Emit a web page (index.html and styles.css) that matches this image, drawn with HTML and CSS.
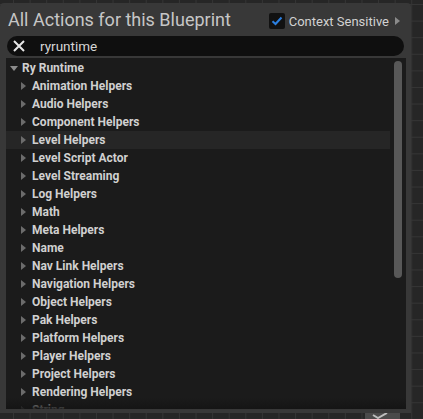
FILE: index.html
```html
<!DOCTYPE html>
<html>
<head>
<meta charset="utf-8">
<link rel="stylesheet" href="styles.css">
</head>
<body>
<div class="panel">
  <div class="header">
    <div class="title">All Actions for this Blueprint</div>
    <div class="ctx">
      <span class="checkbox">
        <svg width="12" height="10" viewBox="0 0 12 10"><path d="M1.5 5.2 L4.5 8 L10.5 1.5" fill="none" stroke="#2b7fe0" stroke-width="2"/></svg>
      </span>
      <span class="ctx-label">Context Sensitive</span>
      <span class="ctx-arrow"></span>
    </div>
  </div>
  <div class="search">
    <svg class="clear" width="12" height="12" viewBox="0 0 12 12"><path d="M1 1 L11 11 M11 1 L1 11" stroke="#e6e6e6" stroke-width="2" fill="none"/></svg>
    <span class="query">ryruntime</span>
  </div>
  <div class="list">
    <div class="row root"><span class="tri-down"></span>Ry Runtime</div>
    <div class="row child"><span class="tri-right"></span>Animation Helpers</div>
    <div class="row child"><span class="tri-right"></span>Audio Helpers</div>
    <div class="row child"><span class="tri-right"></span>Component Helpers</div>
    <div class="row child hover"><span class="tri-right"></span>Level Helpers</div>
    <div class="row child"><span class="tri-right"></span>Level Script Actor</div>
    <div class="row child"><span class="tri-right"></span>Level Streaming</div>
    <div class="row child"><span class="tri-right"></span>Log Helpers</div>
    <div class="row child"><span class="tri-right"></span>Math</div>
    <div class="row child"><span class="tri-right"></span>Meta Helpers</div>
    <div class="row child"><span class="tri-right"></span>Name</div>
    <div class="row child"><span class="tri-right"></span>Nav Link Helpers</div>
    <div class="row child"><span class="tri-right"></span>Navigation Helpers</div>
    <div class="row child"><span class="tri-right"></span>Object Helpers</div>
    <div class="row child"><span class="tri-right"></span>Pak Helpers</div>
    <div class="row child"><span class="tri-right"></span>Platform Helpers</div>
    <div class="row child"><span class="tri-right"></span>Player Helpers</div>
    <div class="row child"><span class="tri-right"></span>Project Helpers</div>
    <div class="row child"><span class="tri-right"></span>Rendering Helpers</div>
    <div class="row child"><span class="tri-right"></span>String</div>
    <div class="scrollbar"></div>
    <div class="fade"></div>
  </div>
</div>
<div class="node-peek">
  <svg width="35" height="6" viewBox="0 0 35 6"><path d="M8 2 L13 5 L22 0" fill="none" stroke="#bdbdbd" stroke-width="2"/></svg>
</div>
</body>
</html>
```
FILE: styles.css
```css
html, body {
  margin: 0;
  padding: 0;
}
body {
  width: 423px;
  height: 419px;
  overflow: hidden;
  position: relative;
  background-color: #262626;
  background-image:
    linear-gradient(to right, #353535 1px, transparent 1px),
    linear-gradient(to bottom, #353535 1px, transparent 1px);
  background-size: 16.6px 16.6px;
  background-position: 13px 4px;
  font-family: Roboto, "Liberation Sans", sans-serif;
}
.panel {
  width: 411px;
  height: 410px;
  margin-top: 3px;
  box-sizing: border-box;
  background: #383838;
  border-radius: 4px 4px 0 0;
  padding: 0 5px 4px 6px;
  display: flex;
  flex-direction: column;
}
.header {
  height: 33px;
  display: flex;
  align-items: center;
  padding-left: 2px;
  flex-shrink: 0;
}
.title {
  font-size: 18px;
  color: #c6c6c6;
  white-space: nowrap;
  flex: 1;
  margin-top: -1px;
}
.ctx {
  display: flex;
  align-items: center;
  margin-right: 6px;
  margin-top: 3px;
}
.checkbox {
  width: 16px;
  height: 16px;
  background: #111111;
  border-radius: 2px;
  display: flex;
  align-items: center;
  justify-content: center;
}
.ctx-label {
  font-size: 13px;
  color: #d2d2d2;
  margin-left: 4px;
  white-space: nowrap;
}
.ctx-arrow {
  width: 0;
  height: 0;
  border-left: 5px solid #8a8a8a;
  border-top: 4.5px solid transparent;
  border-bottom: 4.5px solid transparent;
  margin-left: 6px;
}
.search {
  height: 20px;
  margin: 0 2px 0 1px;
  background: #0f0f0f;
  border-radius: 10px;
  display: flex;
  align-items: center;
  flex-shrink: 0;
}
.clear {
  margin-left: 6px;
}
.query {
  margin-left: 15px;
  font-size: 13.5px;
  color: #d6d6d6;
}
.list {
  margin-top: 2px;
  flex: 1;
  background: #1b1b1b;
  position: relative;
  overflow: hidden;
  padding-top: 1px;
}
.row {
  height: 18px;
  line-height: 18px;
  font-size: 12px;
  font-weight: bold;
  color: #d0d0d0;
  display: flex;
  align-items: center;
  white-space: nowrap;
  margin-right: 16px;
}
.row.hover {
  background: #262626;
}
.root {
  padding-left: 4px;
}
.child {
  padding-left: 15px;
}
.tri-down {
  width: 0;
  height: 0;
  border-top: 5px solid #8c8c8c;
  border-left: 4px solid transparent;
  border-right: 4px solid transparent;
  margin-right: 4px;
}
.tri-right {
  width: 0;
  height: 0;
  border-left: 5px solid #6c6c6c;
  border-top: 4.5px solid transparent;
  border-bottom: 4.5px solid transparent;
  margin-right: 6px;
}
.scrollbar {
  position: absolute;
  right: 4px;
  top: 3px;
  width: 8px;
  height: 217px;
  border-radius: 4px;
  background: #585858;
}
.fade {
  position: absolute;
  left: 0;
  right: 0;
  bottom: 0;
  height: 12px;
  background: linear-gradient(to bottom, rgba(20,20,20,0), rgba(20,20,20,0.9));
}
.node-peek {
  position: absolute;
  left: 365px;
  top: 413px;
  width: 35px;
  height: 6px;
  background: #4a4a4a;
  display: flex;
}
```
